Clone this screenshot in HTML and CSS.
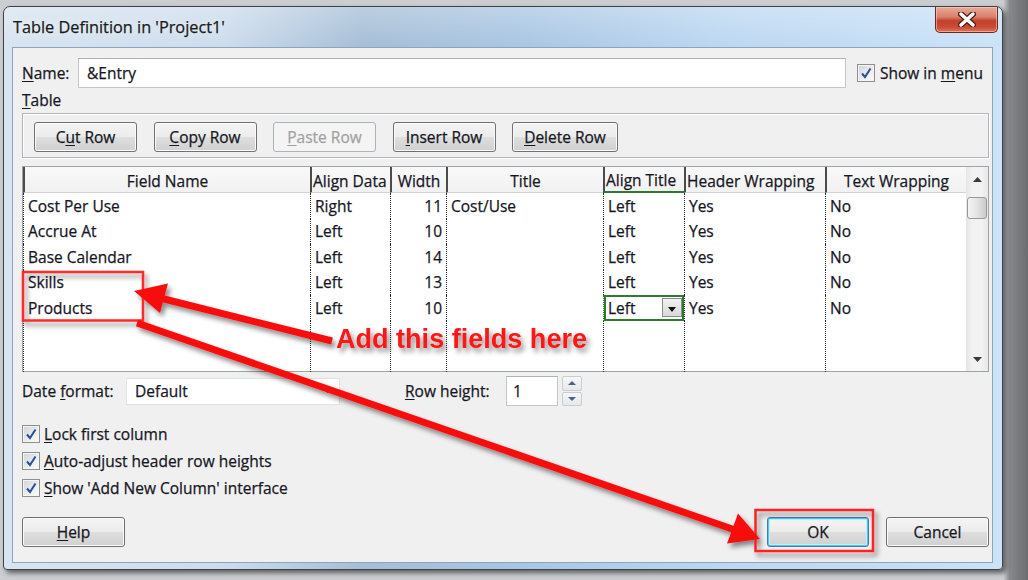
FILE: index.html
```html
<!DOCTYPE html>
<html>
<head>
<meta charset="utf-8">
<title>Table Definition</title>
<link rel="stylesheet" href="styles.css">
</head>
<body>
<div class="desktop">
  <div class="window">
    <div class="titlebar">
      <span class="title">Table Definition in 'Project1'</span>
      <div class="close">
        <svg width="18" height="15" viewBox="0 0 18 15"><path d="M3 2 L15 13 M15 2 L3 13" stroke="#4a2018" stroke-width="6" stroke-linecap="round"/><path d="M3 2 L15 13 M15 2 L3 13" stroke="#ffffff" stroke-width="3.4" stroke-linecap="round"/></svg>
      </div>
    </div>
    <div class="client">
      <div class="name-row">
        <span class="name-lbl"><u>N</u>ame:</span>
        <div class="textbox name-box">&amp;Entry</div>
        <div class="check show-menu">
          <span class="cbox"><svg width="12" height="12" viewBox="0 0 12 12"><path d="M2 6.5 L5 10 L10.5 1.5" fill="none" stroke="#2c4f8f" stroke-width="2"/></svg></span>
          <span>Show in <u>m</u>enu</span>
        </div>
      </div>
      <div class="table-lbl"><u>T</u>able</div>
      <div class="groupbox">
        <div class="btn">C<u>u</u>t Row</div>
        <div class="btn"><u>C</u>opy Row</div>
        <div class="btn disabled"><u>P</u>aste Row</div>
        <div class="btn"><u>I</u>nsert Row</div>
        <div class="btn wide"><u>D</u>elete Row</div>
      </div>
      <div class="grid">
        <table class="fields">
          <colgroup>
            <col class="c1"><col class="c2"><col class="c3"><col class="c4"><col class="c5"><col class="c6"><col class="c7">
          </colgroup>
          <thead>
            <tr>
              <th>Field Name</th>
              <th>Align Data</th>
              <th>Width</th>
              <th>Title</th>
              <th class="hsel">Align Title</th>
              <th>Header Wrapping</th>
              <th>Text Wrapping</th>
            </tr>
          </thead>
          <tbody>
            <tr><td>Cost Per Use</td><td>Right</td><td class="num">11</td><td>Cost/Use</td><td>Left</td><td>Yes</td><td>No</td></tr>
            <tr><td>Accrue At</td><td>Left</td><td class="num">10</td><td></td><td>Left</td><td>Yes</td><td>No</td></tr>
            <tr><td>Base Calendar</td><td>Left</td><td class="num">14</td><td></td><td>Left</td><td>Yes</td><td>No</td></tr>
            <tr><td>Skills</td><td>Left</td><td class="num">13</td><td></td><td>Left</td><td>Yes</td><td>No</td></tr>
            <tr><td>Products</td><td>Left</td><td class="num">10</td><td></td><td class="sel"><div class="selwrap"><span>Left</span><span class="ddbtn"><svg width="8" height="5" viewBox="0 0 8 5"><path d="M0 0 H8 L4 5 Z" fill="#111"/></svg></span></div></td><td>Yes</td><td>No</td></tr>
            <tr class="filler"><td></td><td></td><td></td><td></td><td></td><td></td><td></td></tr>
          </tbody>
        </table>
        <div class="scrollbar">
          <div class="sb-arrow"><svg width="9" height="5" viewBox="0 0 9 5"><path d="M0 5 L4.5 0 L9 5 Z" fill="#3a3a3a"/></svg></div>
          <div class="sb-thumb"></div>
          <div class="sb-track"></div>
          <div class="sb-arrow"><svg width="9" height="5" viewBox="0 0 9 5"><path d="M0 0 L4.5 5 L9 0 Z" fill="#3a3a3a"/></svg></div>
        </div>
      </div>
      <div class="date-row">
        <span class="date-lbl">Date <u>f</u>ormat:</span>
        <div class="combo"><span>Default</span><svg width="7" height="4" viewBox="0 0 7 4"><path d="M0 0 H7 L3.5 4 Z" fill="#333"/></svg></div>
        <span class="rh-lbl"><u>R</u>ow height:</span>
        <div class="textbox spin-box">1</div>
        <div class="spin">
          <div class="spin-btn"><svg width="8" height="4" viewBox="0 0 8 4"><path d="M0 4 L4 0 L8 4 Z" fill="#4d6185"/></svg></div>
          <div class="spin-btn"><svg width="8" height="4" viewBox="0 0 8 4"><path d="M0 0 L4 4 L8 0 Z" fill="#4d6185"/></svg></div>
        </div>
      </div>
      <div class="options">
        <div class="check"><span class="cbox"><svg width="12" height="12" viewBox="0 0 12 12"><path d="M2 6.5 L5 10 L10.5 1.5" fill="none" stroke="#2c4f8f" stroke-width="2"/></svg></span><span><u>L</u>ock first column</span></div>
        <div class="check"><span class="cbox"><svg width="12" height="12" viewBox="0 0 12 12"><path d="M2 6.5 L5 10 L10.5 1.5" fill="none" stroke="#2c4f8f" stroke-width="2"/></svg></span><span><u>A</u>uto-adjust header row heights</span></div>
        <div class="check"><span class="cbox"><svg width="12" height="12" viewBox="0 0 12 12"><path d="M2 6.5 L5 10 L10.5 1.5" fill="none" stroke="#2c4f8f" stroke-width="2"/></svg></span><span><u>S</u>how 'Add New Column' interface</span></div>
      </div>
      <div class="bottom-row">
        <div class="btn"><u>H</u>elp</div>
        <div class="spacer"></div>
        <div class="btn ok">OK</div>
        <div class="btn">Cancel</div>
      </div>
    </div>
  </div>
</div>
<svg class="annot" width="1028" height="580" viewBox="0 0 1028 580">
  <defs>
    <filter id="sh" x="-20%" y="-30%" width="140%" height="160%">
      <feDropShadow dx="3" dy="4" stdDeviation="2.5" flood-color="#000" flood-opacity="0.45"/>
    </filter>
  </defs>
  <g filter="url(#sh)">
    <rect x="23" y="272" width="120" height="48.5" fill="none" stroke="#ff2a2a" stroke-width="2.5"/>
    <rect x="755.5" y="510" width="117.5" height="41" fill="none" stroke="#ff2020" stroke-width="2.5"/>
    <line x1="332" y1="341" x2="160" y2="298" stroke="#f81010" stroke-width="7"/>
    <polygon points="134,291 168,283.5 160,313" fill="#f81010"/>
    <line x1="137" y1="323" x2="738" y2="531" stroke="#f81010" stroke-width="7"/>
    <polygon points="760,539 738,513.5 727,543.5" fill="#f81010"/>
    <text x="336" y="348" class="annot-text" textLength="251" lengthAdjust="spacingAndGlyphs">Add this fields here</text>
  </g>
</svg>
</body>
</html>
```

FILE: styles.css
```css
* { box-sizing: border-box; }
html, body { margin: 0; padding: 0; }
body {
  width: 1028px;
  height: 580px;
  overflow: hidden;
  position: relative;
  background: linear-gradient(90deg, #cbcdd0 0%, #cbcdd0 97.6%, #88898c 98.2%, #6a6c6f 100%);
  font-family: "Open Sans", "Noto Sans", sans-serif;
  font-size: 15.5px;
  color: #16161f;
}
.client, .title { -webkit-text-stroke: 0.25px currentColor; }
u { text-decoration-thickness: 1px; text-underline-offset: 2px; }
.desktop { padding: 6px 0 0 3px; }
.window {
  width: 1000px;
  height: 564px;
  border: 1px solid #3d4349;
  border-radius: 7px 7px 4px 4px;
  background: linear-gradient(90deg, #d8e4f0 0%, #cddced 22%, #a6bed6 36%, #a9c6e3 52%, #bcd7f1 72%, #cbe2f7 100%);
  display: flex;
  flex-direction: column;
  box-shadow: 3px 3px 5px rgba(0,0,0,0.55);
}
.titlebar {
  height: 40px;
  display: flex;
  align-items: flex-start;
  padding-left: 9px;
  background: linear-gradient(180deg, rgba(255,255,255,0.25), rgba(255,255,255,0));
  border-radius: 6px 6px 0 0;
}
.title {
  line-height: 40px;
  font-size: 16.3px;
  color: #1a1a1a;
  text-shadow: 0 0 8px rgba(255,255,255,0.9);
}
.close {
  margin-left: auto;
  margin-right: 4px;
  width: 63px;
  height: 26px;
  border: 1px solid #6b2a20;
  border-top: none;
  border-radius: 0 0 5px 5px;
  background: linear-gradient(180deg, #e9aa99 0%, #d9806b 40%, #c2412a 55%, #cc4a32 80%, #e0765a 100%);
  display: flex;
  align-items: center;
  justify-content: center;
  box-shadow: inset 0 0 0 1px rgba(255,220,210,0.5);
}
.client {
  flex: 1;
  margin: 0 9px 6px 8px;
  background: #f0f0f0;
  border: 1px solid #8ea4bd;
  padding: 10px 3px 0 9px;
  display: flex;
  flex-direction: column;
}
.name-row { height: 30px; display: flex; align-items: center; }
.name-lbl { width: 56px; }
.textbox {
  background: #fff;
  border: 1px solid #c3c6cc;
  border-top-color: #aeb1b7;
  display: flex;
  align-items: center;
}
.name-box { width: 768px; height: 30px; padding-left: 8px; }
.check { display: flex; align-items: center; height: 27px; }
.show-menu { margin-left: 11px; }
.cbox {
  width: 18px;
  height: 18px;
  border: 1px solid #8e8f8f;
  background: linear-gradient(135deg, #cfd3d9 0%, #eceef0 60%, #fbfbfb 100%);
  box-shadow: inset 0 0 0 1px #f4f4f4;
  display: flex;
  align-items: center;
  justify-content: center;
  margin-right: 4px;
}
.show-menu .cbox { margin-right: 5px; }
.table-lbl { height: 25px; line-height: 25px; }
.groupbox {
  height: 45px;
  border: 1px solid #b2b6ba;
  box-shadow: inset 1px 1px 0 #ffffff, 1px 1px 0 #ffffff;
  display: flex;
  align-items: flex-start;
  padding: 8px 0 0 11px;
  gap: 16.5px;
}
.btn {
  width: 103px;
  height: 30px;
  border: 1px solid #707070;
  border-radius: 3px;
  background: linear-gradient(180deg, #f4f4f4 0%, #ececec 48%, #dedede 52%, #d0d0d0 100%);
  box-shadow: inset 0 0 0 1px #fbfbfb;
  display: flex;
  align-items: center;
  justify-content: center;
  color: #16161f;
}
.btn.wide { width: 106px; }
.btn.disabled {
  border-color: #adb2b5;
  background: #f4f4f4;
  color: #a2a2a2;
  box-shadow: none;
}
.grid {
  margin-top: 8px;
  height: 206px;
  border: 1px solid #9ea3a9;
  background: #fff;
  display: flex;
}
.fields {
  width: 943px;
  table-layout: fixed;
  border-collapse: separate;
  border-spacing: 0;
  font-size: 15.5px;
}
.c1 { width: 287px; }
.c2 { width: 80px; }
.c3 { width: 56px; }
.c4 { width: 157px; }
.c5 { width: 81px; }
.c6 { width: 141px; }
.c7 { width: 141px; }
.fields th {
  height: 26px;
  padding: 2px 1px 0 1px;
  font-weight: normal;
  text-align: center;
  white-space: nowrap;
  overflow: hidden;
  background: linear-gradient(180deg, #f9f9f9 0%, #f1f1f2 100%);
  border-left: 2px solid #4b4b4b;
  border-bottom: 1px solid #d2d2d2;
}
.fields th:nth-child(2), .fields th:nth-child(5), .fields th:nth-child(6) { text-align: left; padding-left: 1px; }
.fields th.hsel { border-bottom: 2px solid #2f7a2f; }
.fields td {
  height: 25.5px;
  padding: 0 4px;
  white-space: nowrap;
  overflow: hidden;
  border-left: 1px dotted #2a2a2a;
}
.fields td.num { text-align: right; }
.fields tr.filler td { height: 51.5px; }
.fields td.sel {
  box-shadow: inset 0 0 0 2px #2f7a2f;
  border-left-color: #2f7a2f;
  padding-right: 2px;
}
.selwrap { display: flex; align-items: center; justify-content: space-between; }
.ddbtn {
  width: 20px;
  height: 19px;
  border: 1px solid #8c8c8c;
  background: linear-gradient(180deg, #f2f2f2, #d9d9d9);
  display: flex;
  align-items: flex-end;
  justify-content: center;
  padding-bottom: 4px;
}
.scrollbar {
  width: 22px;
  background: linear-gradient(90deg, #e6e6e6, #f2f2f2 30%, #f2f2f2 70%, #e9e9e9);
  display: flex;
  flex-direction: column;
  align-items: center;
}
.sb-arrow { height: 24px; display: flex; align-items: center; justify-content: center; }
.sb-thumb {
  margin-top: 6px;
  width: 20px;
  height: 22px;
  border: 1px solid #989898;
  border-radius: 3px;
  background: linear-gradient(90deg, #f3f3f3 0%, #e4e4e4 50%, #cbcbcb 100%);
}
.sb-track { flex: 1; }
.date-row { margin-top: 4px; height: 30px; display: flex; align-items: center; }
.date-lbl { width: 104px; }
.combo {
  width: 214px;
  height: 27px;
  background: #fff;
  border: 1px solid #e2e2e2;
  display: flex;
  align-items: center;
  justify-content: space-between;
  padding: 0 8px 0 8px;
}
.rh-lbl { margin-left: 65px; width: 101px; }
.spin-box { width: 52px; height: 30px; padding-left: 6px; }
.spin { margin-left: 4px; width: 20px; height: 30px; display: flex; flex-direction: column; gap: 1px; }
.spin-btn {
  flex: 1;
  border: 1px solid #c9ccd1;
  border-radius: 2px;
  background: linear-gradient(180deg, #f7f7f7, #e7e8ea);
  display: flex;
  align-items: center;
  justify-content: center;
}
.options { margin-top: 14px; display: flex; flex-direction: column; }
.bottom-row { margin-top: 16px; height: 30px; display: flex; gap: 17px; }
.bottom-row .spacer { flex: 1; }
.btn.ok {
  width: 102px;
  border-color: #3c7fb1;
  box-shadow: inset 0 0 0 1px #4fc6f0, inset 0 0 0 2px #c6ecfa;
}
.annot {
  position: absolute;
  left: 0;
  top: 0;
  pointer-events: none;
}
.annot-text {
  font-family: "Liberation Sans", Arial, sans-serif;
  font-weight: bold;
  font-size: 28px;
  fill: #ff1414;
}
```
